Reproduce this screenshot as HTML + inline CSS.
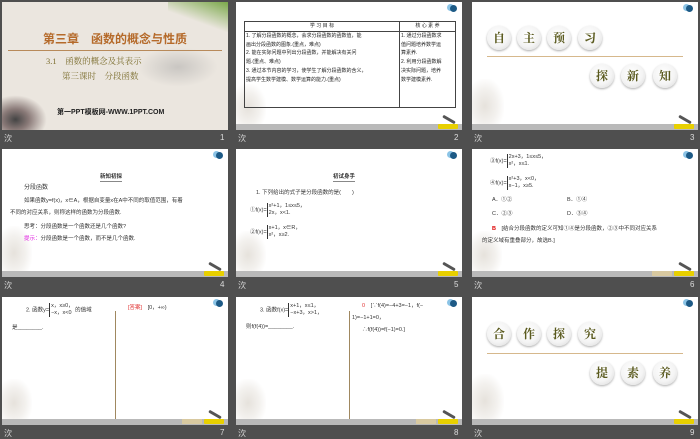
<!DOCTYPE html>
<html><head><meta charset="utf-8">
<style>
*{margin:0;padding:0;box-sizing:border-box}
body{width:700px;height:438px;background:#4f4f4f;position:relative;overflow:hidden;font-family:"Liberation Serif","Noto Serif CJK SC",serif;color:#222}
.s{position:absolute;width:226px;height:128px;background:#fff;overflow:hidden}
.bar{position:absolute;left:0;right:0;bottom:0;height:6px;background:#b9b9b9}
.btn{position:absolute;bottom:1px;height:5px;background:#e8d000;border-radius:1px;width:20px;right:4px}
.btn2{position:absolute;bottom:1px;height:5px;background:#d8c9a0;width:20px;right:26px}
.ic{position:absolute;right:5px;top:3px;width:7px;height:7px;border-radius:50%;background:#1d5a86;box-shadow:-3px -1px 0 0 #8cc4e6}
.pen{position:absolute;right:6px;bottom:9px;width:14px;height:3px;background:#555;transform:rotate(30deg);border-radius:2px}
.fl{position:absolute;left:0;bottom:6px;width:30px;height:40px;background:radial-gradient(ellipse at 40% 60%,#e6e2dc 0,#f3f1ee 45%,rgba(255,255,255,0) 75%)}
.lb{position:absolute;color:#ddd;font-size:8px;font-family:"Liberation Sans","Noto Sans CJK SC",sans-serif}
.t{position:absolute;font-size:5.5px;line-height:8px;white-space:nowrap;font-family:"Liberation Sans","Noto Sans CJK SC",sans-serif;color:#333}
.c{position:absolute;width:24px;height:24px;border-radius:50%;background:radial-gradient(circle at 45% 40%,#fff 0,#f4f4f4 55%,#d6d6d6 100%);box-shadow:0 1px 2px #aaa;font-size:12px;font-weight:bold;color:#5a5a1e;text-align:center;line-height:24px;font-family:"Liberation Serif","Noto Serif CJK SC",serif}
.hl{position:absolute;left:15px;width:196px;top:54px;height:1px;background:#d6b88c}
td{border:1px solid #444;font-size:5px;line-height:8.8px;vertical-align:top;padding:0 1px;font-family:"Liberation Sans","Noto Sans CJK SC",sans-serif}
</style></head><body>

<!-- slide 1 -->
<div class="s" style="left:2px;top:2px;background:#ebe6df">
 <div style="position:absolute;right:0;top:0;width:60px;height:30px;background:linear-gradient(200deg,#7aa84a 0,rgba(235,230,223,0) 60%)"></div>
 <div style="position:absolute;right:10px;top:45px;width:80px;height:40px;background:radial-gradient(ellipse,#c9c6c2 0,rgba(235,230,223,0) 70%)"></div>
 <div style="position:absolute;left:0;bottom:0;width:45px;height:35px;background:radial-gradient(ellipse at 30% 70%,#444 0,#8a7a78 30%,rgba(235,230,223,0) 70%)"></div>
 <div style="position:absolute;left:0;right:0;top:28px;text-align:center;font-size:12px;font-weight:bold;color:#b56a2a;font-family:'Liberation Sans','Noto Sans CJK SC',sans-serif">第三章　函数的概念与性质</div>
 <div style="position:absolute;left:6px;right:6px;top:48px;height:1px;background:#b88a5a"></div>
 <div style="position:absolute;left:44px;top:53px;font-size:8.5px;color:#7d6f30">3.1　函数的概念及其表示</div>
 <div style="position:absolute;left:60px;top:68px;font-size:8.5px;color:#7d6f30">第三课时　分段函数</div>
 <div style="position:absolute;left:55px;top:105px;font-size:7px;font-weight:bold;color:#222;font-family:'Liberation Sans','Noto Sans CJK SC',sans-serif">第一PPT模板网-WWW.1PPT.COM</div>
</div>
<div class="lb" style="left:4px;top:133px">㳄</div><div class="lb" style="left:220px;top:133px">1</div>

<!-- slide 2 -->
<div class="s" style="left:236px;top:2px">
 <div class="ic"></div><div class="fl"></div><div class="pen"></div><div class="bar"></div><div class="btn"></div>
 <table style="position:absolute;left:8px;top:19px;width:212px;border-collapse:collapse">
  <tr><td style="width:155px;text-align:center">学 习 目 标</td><td style="text-align:center">核 心 素 养</td></tr>
  <tr><td style="height:76px">1. 了解分段函数的概念，会求分段函数的函数值，能<br>画出分段函数的图象.(重点，难点)<br>2. 能在实际问题中列出分段函数，并能解决有关问<br>题.(重点、难点)<br>3. 通过本节内容的学习，使学生了解分段函数的含义，<br>提高学生数学建模、数学运算的能力.(重点)</td><td>1. 通过分段函数求<br>值问题培养数学运<br>算素养.<br>2. 利用分段函数解<br>决实际问题，培养<br>数学建模素养.</td></tr>
 </table>
</div>
<div class="lb" style="left:238px;top:133px">㳄</div><div class="lb" style="left:454px;top:133px">2</div>

<!-- slide 3 -->
<div class="s" style="left:472px;top:2px">
 <div class="ic"></div><div class="fl" style="width:32px;height:45px"></div><div class="pen"></div><div class="bar"></div><div class="btn"></div>
 <div class="c" style="left:15px;top:24px">自</div><div class="c" style="left:45px;top:24px">主</div><div class="c" style="left:75px;top:24px">预</div><div class="c" style="left:106px;top:24px">习</div>
 <div class="hl"></div>
 <div class="c" style="left:118px;top:62px">探</div><div class="c" style="left:149px;top:62px">新</div><div class="c" style="left:181px;top:62px">知</div>
</div>
<div class="lb" style="left:474px;top:133px">㳄</div><div class="lb" style="left:690px;top:133px">3</div>

<!-- slide 4 -->
<div class="s" style="left:2px;top:149px">
 <div class="ic"></div><div class="fl" style="bottom:6px;height:45px"></div><div class="pen"></div><div class="bar"></div><div class="btn"></div>
 <div class="t" style="left:98px;top:24px;border:1px solid #888;border-width:0 0 1px;font-weight:bold">新知初探</div>
 <div class="t" style="left:22px;top:35px;font-size:6px">分段函数</div>
 <div class="t" style="left:22px;top:48px">如果函数y=f(x)，x∈A，根据自变量x在A中不同的取值范围，有着</div>
 <div class="t" style="left:8px;top:60px">不同的对应关系，则称这样的函数为分段函数.</div>
 <div class="t" style="left:22px;top:74px">思考：分段函数是一个函数还是几个函数?</div>
 <div class="t" style="left:22px;top:86px"><span style="color:#e020e0">提示：</span>分段函数是一个函数，而不是几个函数.</div>
</div>
<div class="lb" style="left:4px;top:280px">㳄</div><div class="lb" style="left:220px;top:280px">4</div>

<!-- slide 5 -->
<div class="s" style="left:236px;top:149px">
 <div class="ic"></div><div class="fl"></div><div class="pen"></div><div class="bar"></div><div class="btn"></div>
 <div class="t" style="left:97px;top:24px;border-bottom:1px solid #888;font-weight:bold">初试身手</div>
 <div class="t" style="left:20px;top:40px">1. 下列给出的式子是分段函数的是(　　)</div>
 <div class="t" style="left:14px;top:54px">①f(x)=<span style="display:inline-block;vertical-align:middle;border-left:1px solid #333;padding-left:1px;line-height:7px">x²+1，1≤x≤5，<br>2x，x&lt;1.</span></div>
 <div class="t" style="left:14px;top:76px">②f(x)=<span style="display:inline-block;vertical-align:middle;border-left:1px solid #333;padding-left:1px;line-height:7px">x+1，x∈R，<br>x²，x≥2.</span></div>
</div>
<div class="lb" style="left:238px;top:280px">㳄</div><div class="lb" style="left:454px;top:280px">5</div>

<!-- slide 6 -->
<div class="s" style="left:472px;top:149px">
 <div class="ic"></div><div class="fl"></div><div class="pen"></div><div class="bar"></div><div class="btn"></div><div class="btn2"></div>
 <div class="t" style="left:18px;top:5px">③f(x)=<span style="display:inline-block;vertical-align:middle;border-left:1px solid #333;padding-left:1px;line-height:7px">2x+3，1≤x≤5，<br>x²，x≤1.</span></div>
 <div class="t" style="left:18px;top:27px">④f(x)=<span style="display:inline-block;vertical-align:middle;border-left:1px solid #333;padding-left:1px;line-height:7px">x²+3，x&lt;0，<br>x−1，x≥5.</span></div>
 <div class="t" style="left:20px;top:47px">A．①②</div><div class="t" style="left:95px;top:47px">B．①④</div>
 <div class="t" style="left:20px;top:61px">C．②③</div><div class="t" style="left:95px;top:61px">D．③④</div>
 <div class="t" style="left:20px;top:76px"><span style="color:#d00;font-weight:bold">B</span>　[结合分段函数的定义可知①④是分段函数，②③中不同对应关系</div>
 <div class="t" style="left:10px;top:88px">的定义域有重叠部分，故选B.]</div>
</div>
<div class="lb" style="left:474px;top:280px">㳄</div><div class="lb" style="left:690px;top:280px">6</div>

<!-- slide 7 -->
<div class="s" style="left:2px;top:297px">
 <div class="ic"></div><div class="fl"></div><div class="pen"></div><div class="bar"></div><div class="btn"></div><div class="btn2"></div>
 <div style="position:absolute;left:113px;top:14px;width:1px;height:108px;background:#a08860"></div>
 <div class="t" style="left:24px;top:6px">2. 函数y=<span style="display:inline-block;vertical-align:middle;border-left:1px solid #333;padding-left:1px;line-height:7px">x，x≥0，<br>−x，x&lt;0</span> 的值域</div>
 <div class="t" style="left:10px;top:27px">是________.</div>
 <div class="t" style="left:126px;top:7px"><span style="color:#e03030">[答案]</span>　[0，+∞)</div>
</div>
<div class="lb" style="left:4px;top:428px">㳄</div><div class="lb" style="left:220px;top:428px">7</div>

<!-- slide 8 -->
<div class="s" style="left:236px;top:297px">
 <div class="ic"></div><div class="fl"></div><div class="pen"></div><div class="bar"></div><div class="btn"></div><div class="btn2"></div>
 <div style="position:absolute;left:113px;top:14px;width:1px;height:108px;background:#a08860"></div>
 <div class="t" style="left:24px;top:6px">3. 函数f(x)=<span style="display:inline-block;vertical-align:middle;border-left:1px solid #333;padding-left:1px;line-height:7px">x+1，x≤1，<br>−x+3，x&gt;1，</span></div>
 <div class="t" style="left:10px;top:26px">则f(f(4))=________.</div>
 <div class="t" style="left:126px;top:5px"><span style="color:#e03030">0</span>　[∵f(4)=−4+3=−1，f(−</div>
 <div class="t" style="left:116px;top:17px">1)=−1+1=0，</div>
 <div class="t" style="left:126px;top:29px">∴f(f(4))=f(−1)=0.]</div>
</div>
<div class="lb" style="left:238px;top:428px">㳄</div><div class="lb" style="left:454px;top:428px">8</div>

<!-- slide 9 -->
<div class="s" style="left:472px;top:297px">
 <div class="ic"></div><div class="fl" style="width:32px;height:45px"></div><div class="pen"></div><div class="bar"></div><div class="btn"></div>
 <div class="c" style="left:15px;top:25px">合</div><div class="c" style="left:45px;top:25px">作</div><div class="c" style="left:75px;top:25px">探</div><div class="c" style="left:106px;top:25px">究</div>
 <div class="hl" style="top:56px"></div>
 <div class="c" style="left:118px;top:64px">提</div><div class="c" style="left:149px;top:64px">素</div><div class="c" style="left:181px;top:64px">养</div>
</div>
<div class="lb" style="left:474px;top:428px">㳄</div><div class="lb" style="left:690px;top:428px">9</div>

</body></html>
